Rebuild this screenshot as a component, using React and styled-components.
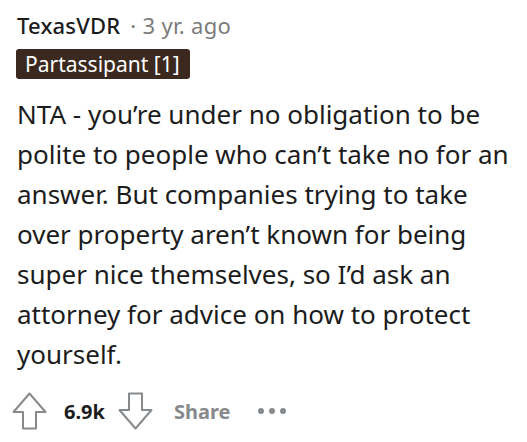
import React from "react";
import styled, { createGlobalStyle } from "styled-components";

const Global = createGlobalStyle`
  html, body { margin: 0; padding: 0; background: #fff; }
  body { font-family: "Noto Sans", sans-serif; }
`;

const Wrap = styled.div`
  padding: 10px 10px 0 17px;
  display: flex;
  flex-direction: column;
`;

const Meta = styled.div`
  display: flex;
  align-items: baseline;
  font-size: 22px;
  line-height: 30px;
  color: #1c1c1c;
`;

const Author = styled.span`
  font-weight: 500;
  letter-spacing: 0.2px;
`;

const Age = styled.span`
  color: #7c7c7c;
  margin-left: 10px;
  letter-spacing: 0.3px;
`;

const Flair = styled.div`
  align-self: flex-start;
  margin-top: 9px;
  margin-left: -1px;
  background: #3b2920;
  color: #fff;
  font-size: 21px;
  line-height: 30px;
  padding: 0 10px 0 9px;
  border-radius: 3px;
`;

const Body = styled.p`
  margin: 15px 0 0 0;
  font-size: 26px;
  line-height: 40px;
  color: #1c1c1c;
`;

const Actions = styled.div`
  display: flex;
  align-items: center;
  margin-top: 18px;
  margin-left: -5px;
`;

const Vote = styled.span`
  font-weight: 700;
  font-size: 20px;
  color: #1c1c1c;
  margin: 0 13px 0 17px;
`;

const Share = styled.span`
  font-weight: 700;
  font-size: 20px;
  color: #878a8c;
  margin-left: 21px;
`;

const Dots = styled.span`
  margin-left: 28px;
  display: flex;
  gap: 5px;
  & > i {
    width: 6px;
    height: 6px;
    border-radius: 50%;
    background: #878a8c;
  }
`;

const Arrow = ({ down }) => (
  <svg
    width="35"
    height="38"
    viewBox="0 0 35 38"
    style={down ? { transform: "rotate(180deg)" } : undefined}
  >
    <path
      d="M17.5 1.5 L33.5 20 L24 20 L24 36.5 L11 36.5 L11 20 L1.5 20 Z"
      fill="none"
      stroke="#878a8c"
      strokeWidth="2"
      strokeLinejoin="round"
    />
  </svg>
);

export default function App() {
  return (
    <>
      <Global />
      <Wrap>
        <Meta>
          <Author>TexasVDR</Author>
          <Age>· 3 yr. ago</Age>
        </Meta>
        <Flair>Partassipant [1]</Flair>
        <Body>
          NTA - you’re under no obligation to be polite to people who can’t take no for an answer. But companies trying to take over property aren’t known for being super nice themselves, so I’d ask an attorney for advice on how to protect yourself.
        </Body>
        <Actions>
          <Arrow />
          <Vote>6.9k</Vote>
          <Arrow down />
          <Share>Share</Share>
          <Dots>
            <i />
            <i />
            <i />
          </Dots>
        </Actions>
      </Wrap>
    </>
  );
}
